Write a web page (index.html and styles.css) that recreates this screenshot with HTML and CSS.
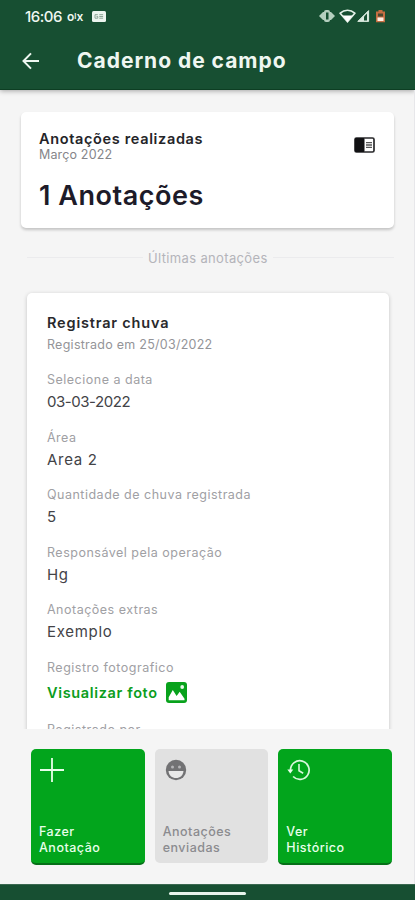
FILE: index.html
```html
<!DOCTYPE html>
<html lang="pt-BR">
<head>
<meta charset="utf-8">
<title>Caderno de campo</title>
<link rel="stylesheet" href="styles.css">
</head>
<body>
<div class="screen">
  <header class="top">
    <div class="status">
      <span class="time">16:06</span>
      <span class="brand">o<i>l</i>x</span>
      <svg class="news" width="14" height="11" viewBox="0 0 14 11"><rect width="14" height="11" rx="1.5" fill="#edf5ef"/><path d="M5.800 3.700H3v3.500h2.800V5.500H4.500M7.300 3.700h3.800M7.300 5.500h3.800M7.300 7.200h3.800" fill="none" stroke="#8ca596" stroke-width="1"/></svg>
      <svg class="signals" width="69" height="16" viewBox="0 0 69 16">
        <path d="M1 8l4-4h1q0-2 2-2h2q2 0 2 2h1l4 4-4 4h-1q0 2-2 2H8q-2 0-2-2H5z" fill="#b5cfbf"/><rect x="8" y="4.500" width="2.500" height="7" fill="#174f32"/>
        <path d="M22.200 5.200C26.500 1.300 32.500 1.300 36.800 5.200L29.500 13.700z" fill="none" stroke="#e5f2e9" stroke-width="1.600"/><path d="M24.500 7.500h10L29.500 14z" fill="#fff"/>
        <path d="M39.800 13.400L50.600 2.600v10.800z" fill="#d9e9de" stroke="#d9e9de"/><path d="M46 8.500l3-3v7h-3z" fill="#174f32"/>
        <path d="M60.500 2h4v1.500H67v10.800h-9V3.500h2.500z" fill="#c46e42"/><rect x="60" y="5.500" width="5" height="3" fill="#4b4930"/><rect x="59.500" y="9.500" width="6" height="3.500" fill="#fff0e5"/>
      </svg>
    </div>
    <div class="bar">
      <svg class="back" width="18" height="18" viewBox="0 0 18 18"><path d="M17 9H1.700M9 1.400L1.500 9 9 16.600" fill="none" stroke="#eef7f1" stroke-width="2"/></svg>
      <h1><span class="t-title">Caderno de campo</span></h1>
    </div>
  </header>

  <main class="content">
    <section class="summary">
      <div>
        <h2><span class="t-sum">Anotações realizadas</span></h2>
        <p class="month"><span class="t-month">Março 2022</span></p>
        <p class="count"><span class="t-count">1 Anotações</span></p>
      </div>
      <svg class="book" width="21" height="16" viewBox="0 0 21 16"><rect x="1" y="1" width="19" height="14" rx="1.500" fill="#fff" stroke="#29292b" stroke-width="1.700"/><rect x="1" y="1" width="9.500" height="14" rx="1" fill="#111113"/><path d="M12 5.700h6M12 8h6M12 10.300h6" stroke="#555" stroke-width="1.300"/></svg>
    </section>

    <div class="divider"><span class="t-div">Últimas anotações</span></div>

    <div class="feed">
      <article class="note">
        <h3><span class="t-note">Registrar chuva</span></h3>
        <p class="date"><span class="t-date">Registrado em 25/03/2022</span></p>
        <dl>
          <div><dt>Selecione a data</dt><dd class="num">03-03-2022</dd></div>
          <div><dt>Área</dt><dd>Area 2</dd></div>
          <div><dt>Quantidade de chuva registrada</dt><dd>5</dd></div>
          <div><dt>Responsável pela operação</dt><dd>Hg</dd></div>
          <div><dt>Anotações extras</dt><dd>Exemplo</dd></div>
          <div><dt>Registro fotografico</dt><dd class="photo"><span>Visualizar foto</span><svg width="21" height="21" viewBox="0 0 21 21"><rect width="21" height="21" rx="3" fill="#08a21c"/><path d="M2.700 18.300v-3L6.800 8l3.800 6 3.100-4.300 4.800 7v1.600z" fill="#fff"/><circle cx="16.200" cy="5" r="1.900" fill="#e6f8e8"/></svg></dd></div>
          <div class="last"><dt>Registrado por</dt></div>
        </dl>
      </article>
    </div>

    <nav class="actions">
      <a class="act"><svg width="26" height="26" viewBox="0 0 26 26"><path d="M13 1v24M1 13h24" stroke="#e8ffe9" stroke-width="1.800"/></svg><span>Fazer<br>Anotação</span></a>
      <a class="act off"><svg width="26" height="26" viewBox="0 0 26 26"><circle cx="13" cy="13" r="10.200" fill="#727274"/><path d="M5.500 14h15c-.4 4.500-3.500 7-7.500 7s-7.100-2.500-7.500-7z" fill="#e8e8e8"/><circle cx="9.500" cy="10" r="1.500" fill="#b5b5b7"/><circle cx="16.500" cy="10" r="1.500" fill="#b5b5b7"/></svg><span>Anotações<br>enviadas</span></a>
      <a class="act"><svg width="26" height="26" viewBox="0 0 26 26"><path d="M4.500 13a9.300 9.300 0 1 1 2.600 6.500" fill="none" stroke="#d9f8dc" stroke-width="1.700"/><path d="M1.300 12.500h6L4.300 16.500z" fill="#e9ffec"/><path d="M13 7v6.800l4.200 2.500" fill="none" stroke="#d9f8dc" stroke-width="1.600"/></svg><span>Ver<br>Histórico</span></a>
    </nav>
  </main>
  <footer class="home"><i></i></footer>
</div>
</body>
</html>
```

FILE: styles.css
```css
* { box-sizing: border-box; }
body, h1, h2, h3, p, dl, dt, dd { margin: 0; font-weight: 400; }
svg { display: block; flex: none; }
body { font-family: Inter, "Open Sans", sans-serif; color: #3d3d40; }
.screen { width: 415px; height: 900px; display: flex; flex-direction: column; overflow: hidden; background: #f5f5f5; }

.top { height: 90px; flex: none; background: #174f32; color: #eff7f1; border-bottom: 1px solid #0d3e23; box-shadow: 0 1px 5px #0005; }
.status { height: 32px; padding: 0 28px 0 25px; display: flex; align-items: center; }
.time { width: 42px; font-size: 15px; font-weight: 500; letter-spacing: -.5px; }
.brand { width: 25px; font-size: 12px; font-weight: 600; letter-spacing: 0; line-height: 12px; }
.brand i { font-style: normal; font-size: 8px; vertical-align: 2px; }
.signals { margin-left: auto; }
.bar { height: 57px; padding: 0 22px; display: flex; align-items: center; }
.bar h1 { margin-left: 37px; font-size: 21px; line-height: 26px; white-space: nowrap; }
.t-title { font-weight: 700; letter-spacing: .98px; }

.content { flex: 1; min-height: 0; border-right: 1px solid #e7e7ea; }
.summary { margin: 22px 20px 0 21px; height: 116px; padding: 17px 19px 0 18px; display: flex; justify-content: space-between; background: #fff; border-radius: 5px; box-shadow: 0 2px 3px #0003; }
.summary h2 { font-size: 14.500px; line-height: 19px; color: #242428; }
.t-sum { font-weight: 600; letter-spacing: .65px; }
.month { font-size: 12.500px; line-height: 14px; color: #858589; }
.t-month { letter-spacing: .15px; }
.count { margin-top: 17px; font-size: 27px; line-height: 34px; color: #1d1b29; }
.t-count { font-weight: 600; letter-spacing: .55px; }
.book { margin-top: 8px; }

.divider { margin: 19px 20px 0 27px; height: 21px; display: flex; align-items: center; gap: 5px; font-size: 13px; color: #b4b4ba; white-space: nowrap; }
.divider::before { content: ""; width: 116px; height: 1px; background: #ebebed; }
.divider::after { content: ""; flex: 1; height: 1px; background: #ebebed; }
.t-div { letter-spacing: .35px; }

.feed { height: 461px; padding: 25px 25px 0 27px; overflow: hidden; }
.note { height: 500px; padding: 20px; background: #fff; border-radius: 5px; box-shadow: 0 1px 4px #0003; }
.note h3 { font-size: 14.500px; line-height: 20px; color: #29292c; }
.t-note { font-weight: 600; letter-spacing: .82px; }
.date { font-size: 12.500px; line-height: 24px; color: #949498; }
.t-date { letter-spacing: .26px; }
dl { padding-top: 13px; }
dl > div { height: 57.500px; white-space: nowrap; }
dl > .last { padding-top: 5px; }
dt { font-size: 12.500px; line-height: 20px; letter-spacing: .5px; color: #a0a0a4; }
dd { font-size: 15px; line-height: 24px; letter-spacing: .7px; color: #434347; }
.num { letter-spacing: -.45px; }
.photo { margin-top: 3px; display: flex; align-items: center; gap: 8px; font-size: 14.500px; color: #0b9d20; }
.photo span { font-weight: 600; letter-spacing: .65px; }

.actions { margin: 20px 22px 0 31px; height: 116px; display: grid; grid-template-columns: repeat(3, 1fr); gap: 10px; }
.act { height: 116px; padding: 8px 8px 8px; display: flex; flex-direction: column; justify-content: space-between; border-radius: 5px; background: #02a51c; border-bottom: 2px solid #067018; color: #e8ffea; font-size: 12.500px; line-height: 15.500px; letter-spacing: .5px; font-weight: 500; }
.off { height: 114px; background: #e1e1e1; border-bottom: 0; color: #8b8b8f; }

.home { height: 16px; flex: none; background: #174f32; border-top: 1px solid #3a6850; display: flex; justify-content: center; }
.home i { width: 77px; height: 3px; margin-top: 7px; border-radius: 2px; background: #e8f5ec; }
```
